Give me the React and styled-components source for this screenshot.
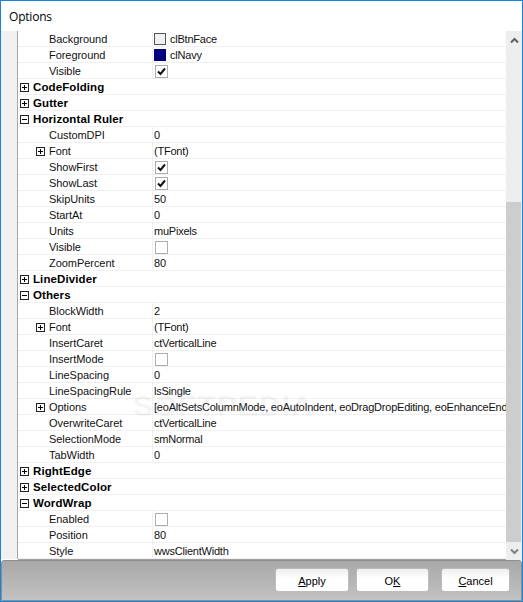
import React from 'react';
import styled, { createGlobalStyle } from 'styled-components';

const rows = [
  { name: 'Background', swatch: '#f0f0f0', value: 'clBtnFace' },
  { name: 'Foreground', swatch: '#000080', value: 'clNavy' },
  { name: 'Visible', check: true },
  { group: 'CodeFolding', open: false },
  { group: 'Gutter', open: false },
  { group: 'Horizontal Ruler', open: true },
  { name: 'CustomDPI', value: '0' },
  { name: 'Font', value: '(TFont)', expand: true },
  { name: 'ShowFirst', check: true },
  { name: 'ShowLast', check: true },
  { name: 'SkipUnits', value: '50' },
  { name: 'StartAt', value: '0' },
  { name: 'Units', value: 'muPixels' },
  { name: 'Visible', check: false },
  { name: 'ZoomPercent', value: '80' },
  { group: 'LineDivider', open: false },
  { group: 'Others', open: true },
  { name: 'BlockWidth', value: '2' },
  { name: 'Font', value: '(TFont)', expand: true },
  { name: 'InsertCaret', value: 'ctVerticalLine' },
  { name: 'InsertMode', check: false },
  { name: 'LineSpacing', value: '0' },
  { name: 'LineSpacingRule', value: 'lsSingle' },
  { name: 'Options', value: '[eoAltSetsColumnMode, eoAutoIndent, eoDragDropEditing, eoEnhanceEndKey, eoGroupUndo]', expand: true },
  { name: 'OverwriteCaret', value: 'ctVerticalLine' },
  { name: 'SelectionMode', value: 'smNormal' },
  { name: 'TabWidth', value: '0' },
  { group: 'RightEdge', open: false },
  { group: 'SelectedColor', open: false },
  { group: 'WordWrap', open: true },
  { name: 'Enabled', check: false },
  { name: 'Position', value: '80' },
  { name: 'Style', value: 'wwsClientWidth' },
];

function Expander({ open }) {
  return (
    <svg width="9" height="9" viewBox="0 0 9 9" shapeRendering="crispEdges">
      <rect x="0.5" y="0.5" width="8" height="8" fill="#fff" stroke="#222" />
      <path d="M2 4.5H7" stroke="#000" />
      {!open && <path d="M4.5 2V7" stroke="#000" />}
    </svg>
  );
}

function Value({ row }) {
  if (row.check !== undefined) {
    return (
      <CheckBox>
        {row.check && (
          <svg width="9" height="9" viewBox="0 0 9 9">
            <path d="M1 4.5L3.5 7L8 1.5" fill="none" stroke="#111" strokeWidth="2" />
          </svg>
        )}
      </CheckBox>
    );
  }
  return (
    <>
      {row.swatch && <Swatch $color={row.swatch} />}
      <ValueText>{row.value}</ValueText>
    </>
  );
}

export default function App() {
  return (
    <Window>
      <GlobalStyle />
      <Title>Options</Title>
      <Content>
        <Gutter />
        <Grid>
          {rows.map((row, i) =>
            row.group ? (
              <GroupRow key={i}>
                <Expander open={row.open} />
                <span>{row.group}</span>
              </GroupRow>
            ) : (
              <Row key={i}>
                <NameCell $expand={row.expand}>
                  {row.expand && <Expander />}
                  <span>{row.name}</span>
                </NameCell>
                <ValueCell>
                  <Value row={row} />
                </ValueCell>
              </Row>
            )
          )}
          <Watermark>SOFTPEDIA</Watermark>
        </Grid>
        <ScrollBar>
          <ScrollArrow>
            <svg width="9" height="7" viewBox="0 0 9 7">
              <path d="M1 5.5L4.5 2L8 5.5" fill="none" stroke="#606060" strokeWidth="2" />
            </svg>
          </ScrollArrow>
          <ScrollThumb />
          <ScrollArrow>
            <svg width="9" height="7" viewBox="0 0 9 7">
              <path d="M1 1.5L4.5 5L8 1.5" fill="none" stroke="#808080" strokeWidth="2" />
            </svg>
          </ScrollArrow>
        </ScrollBar>
      </Content>
      <Footer>
        <Button $width={74}><u>A</u>pply</Button>
        <Button $width={73}>O<u>K</u></Button>
        <Button $width={69} $gap={5}><u>C</u>ancel</Button>
      </Footer>
    </Window>
  );
}

const GlobalStyle = createGlobalStyle`
  html, body {
    margin: 0;
    padding: 0;
    background: #fff;
  }
`;

const Window = styled.div`
  box-sizing: border-box;
  width: 523px;
  height: 602px;
  display: flex;
  flex-direction: column;
  overflow: hidden;
  background: #fff;
  border: 1px solid #1883d7;
  font-family: "Liberation Sans", Arial, sans-serif;
  font-size: 11px;
  color: #111;
`;

const Title = styled.div`
  height: 30px;
  flex: none;
  padding: 9px 0 0 8px;
  box-sizing: border-box;
  font-family: "Open Sans", sans-serif;
  font-size: 12px;
  letter-spacing: -0.2px;
  line-height: 14px;
  color: #000;
`;

const Content = styled.div`
  height: 529px;
  flex: none;
  display: flex;
`;

const Gutter = styled.div`
  box-sizing: border-box;
  width: 17px;
  flex: none;
  height: 528px;
  background: #f0f0f0;
  border-right: 1px solid #a8a8a8;
`;

const Grid = styled.div`
  position: relative;
  width: 488px;
  flex: none;
  overflow: hidden;
  border-bottom: 1px solid #a0a0a0;
  height: 528px;
`;

const Row = styled.div`
  box-sizing: border-box;
  height: 16px;
  padding-top: 1px;
  display: flex;
  border-bottom: 1px solid #f0f0f0;
  white-space: nowrap;
  line-height: 15px;
`;

const GroupRow = styled(Row)`
  align-items: center;
  gap: 4px;
  padding-left: 2px;
  font-weight: 700;
  font-size: 11.5px;
  letter-spacing: 0.1px;
  color: #000;
`;

const NameCell = styled.div`
  box-sizing: border-box;
  width: 135px;
  margin-top: -1px;
  padding-top: 1px;
  flex: none;
  display: flex;
  align-items: center;
  gap: 4px;
  padding-left: ${(p) => (p.$expand ? '18px' : '31px')};
  letter-spacing: -0.05px;
  border-right: 1px solid #f0f0f0;
`;

const ValueCell = styled.div`
  flex: 1;
  min-width: 0;
  display: flex;
  align-items: center;
  gap: 4px;
  padding-left: 1px;
  overflow: hidden;
`;

const ValueText = styled.span`
  white-space: nowrap;
  letter-spacing: -0.22px;
`;

const CheckBox = styled.div`
  box-sizing: border-box;
  width: 13px;
  height: 13px;
  flex: none;
  margin-left: 1px;
  display: flex;
  align-items: center;
  justify-content: center;
  background: #fff;
  border: 1px solid #adadad;
`;

const Swatch = styled.div`
  box-sizing: border-box;
  width: 12px;
  height: 12px;
  flex: none;
  background: ${(p) => p.$color};
  border: 1px solid ${(p) => (p.$color === '#000080' ? '#000080' : '#555')};
`;

const Watermark = styled.div`
  position: absolute;
  left: 115px;
  top: 358px;
  font-size: 30px;
  line-height: 34px;
  font-weight: 700;
  letter-spacing: 1px;
  color: rgba(150, 150, 150, 0.1);
  pointer-events: none;
`;

const ScrollBar = styled.div`
  width: 16px;
  flex: none;
  display: flex;
  flex-direction: column;
  background: #eeeeee;
`;

const ScrollArrow = styled.div`
  height: 18px;
  flex: none;
  display: flex;
  align-items: center;
  justify-content: center;
  background: #eeeeee;
`;

const ScrollThumb = styled.div`
  width: 15px;
  height: 340px;
  margin-top: auto;
  background: #cdcdcd;
`;

const Footer = styled.div`
  flex: 1;
  display: flex;
  align-items: center;
  justify-content: flex-end;
  gap: 7px;
  padding: 0 11px 1px 0;
  border: 1px solid #8f8f8f;
  border-radius: 3px 3px 0 0;
  background: linear-gradient(#a8a8a8, #c2c2c2);
`;

const Button = styled.button`
  box-sizing: border-box;
  width: ${(p) => p.$width}px;
  height: 24px;
  margin-left: ${(p) => p.$gap || 0}px;
  padding: 1px 0 0;
  border: 1px solid #bcbcbc;
  border-radius: 3px;
  background: linear-gradient(#eeeeee, #ffffff 45%);
  font-family: "Liberation Sans", Arial, sans-serif;
  font-size: 11px;
  color: #000;
`;
